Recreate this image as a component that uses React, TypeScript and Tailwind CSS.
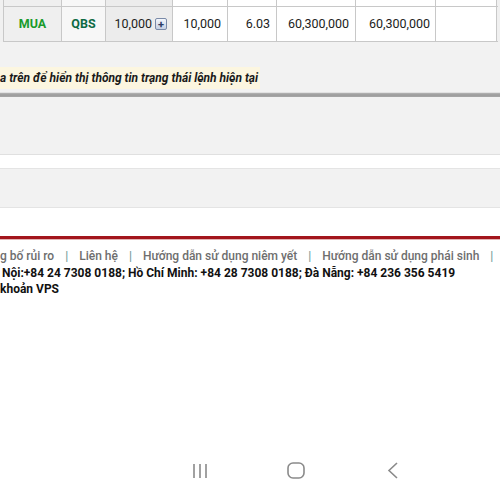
import React from "react";

const cols = [
  { w: "w-[59px]", bg: "bg-[#efefef]" },
  { w: "w-[44px]", bg: "bg-[#f7f7f7]" },
  { w: "w-[67px]", bg: "bg-[#ececec]" },
  { w: "w-[55px]", bg: "bg-white" },
  { w: "w-[49px]", bg: "bg-white" },
  { w: "w-[79px]", bg: "bg-white" },
  { w: "w-[80px]", bg: "bg-white" },
  { w: "w-[61px]", bg: "bg-white" },
];

const App = () => {
  return (
    <div className="w-[500px] h-[500px] overflow-hidden bg-white flex flex-col font-['Roboto',sans-serif] text-[12px]">
      {/* order table */}
      <div className="bg-[#f0f0f0] pl-[3px] flex flex-col">
        <div className="flex h-[6px]">
          {cols.map((c, i) => (
            <div key={i} className={`${c.w} ${c.bg} border-r border-[#c8c8c8] ${i === 0 ? "border-l" : ""}`}></div>
          ))}
        </div>
        <div className="flex h-[36px] border-t border-b border-[#c8c8c8] w-[495px] text-[12.5px]">
          <div className="w-[59px] bg-[#efefef] border-l border-r border-[#c8c8c8] flex items-center justify-center font-bold text-[#1a9b2c]">
            MUA
          </div>
          <div className="w-[44px] bg-[#f7f7f7] border-r border-[#c8c8c8] flex items-center justify-center font-bold text-[#0e6b44]">
            QBS
          </div>
          <div className="w-[67px] bg-[#ececec] border-r border-[#c8c8c8] flex items-center justify-end pr-[5px] gap-[3px] text-[#222]">
            <span>10,000</span>
            <span className="w-[12px] h-[12px] rounded-[2px] border border-[#7a8aa8] bg-gradient-to-b from-[#f4f7fc] to-[#c5d0e4] flex items-center justify-center text-[11px] leading-none font-bold text-[#2c3c66]">
              +
            </span>
          </div>
          <div className="w-[55px] bg-white border-r border-[#c8c8c8] flex items-center justify-end pr-[6px] text-[#222]">
            10,000
          </div>
          <div className="w-[49px] bg-white border-r border-[#c8c8c8] flex items-center justify-end pr-[6px] text-[#222]">
            6.03
          </div>
          <div className="w-[79px] bg-white border-r border-[#c8c8c8] flex items-center justify-end pr-[6px] text-[#222]">
            60,300,000
          </div>
          <div className="w-[80px] bg-white border-r border-[#c8c8c8] flex items-center justify-end pr-[5px] text-[#222]">
            60,300,000
          </div>
          <div className="w-[61px] bg-white border-r border-[#c8c8c8]"></div>
        </div>
      </div>

      {/* hint */}
      <div className="bg-[#f2f2f2] h-[50px] flex items-center pt-[21px]">
        <span className="bg-[#fcf6e0] pr-[2px] py-[2px] italic font-bold text-[12px] text-[#1a1a1a]">
          a trên để hiển thị thông tin trạng thái lệnh hiện tại
        </span>
      </div>

      {/* thick separator */}
      <div className="h-[1px] bg-[#e2e2e2]"></div>
      <div className="h-[4px] bg-gradient-to-b from-[#b4b4b4] via-[#9c9c9c] to-[#a8a8a8]"></div>

      {/* panels */}
      <div className="h-[58px] bg-[#f2f2f2] border-b border-[#e0e0e0]"></div>
      <div className="h-[13px] bg-white"></div>
      <div className="h-[40px] bg-[#f2f2f2] border-t border-b border-[#e4e4e4]"></div>

      {/* footer */}
      <div className="h-[28px] bg-white"></div>
      <div className="h-[3px] bg-[#a3161c]"></div>
      <div className="h-[1px] bg-[#e3b4b4]"></div>
      <div className="flex flex-col pt-[8px] leading-[16.5px] whitespace-nowrap">
        <div className="flex items-center text-[#6e6e6e] font-medium gap-[11px]">
          <span>g bố rủi ro</span>
          <span className="text-[#6f9c9a]">|</span>
          <span>Liên hệ</span>
          <span className="text-[#6f9c9a]">|</span>
          <span>Hướng dẫn sử dụng niêm yết</span>
          <span className="text-[#6f9c9a]">|</span>
          <span>Hướng dẫn sử dụng phái sinh</span>
          <span className="text-[#6f9c9a]">|</span>
        </div>
        <div className="pl-[2px] font-bold text-[#111]">
          Nội:+84 24 7308 0188; Hồ Chí Minh: +84 28 7308 0188; Đà Nẵng: +84 236 356 5419
        </div>
        <div className="font-bold text-[#111]">khoản VPS</div>
      </div>

      <div className="flex-1"></div>

      {/* android nav bar */}
      <div className="h-[52px] flex items-start pt-[14px]">
        <div className="w-[500px] flex items-center">
          <div className="w-[191px]"></div>
          <svg width="18" height="16" viewBox="0 0 18 16" fill="none" stroke="#8a8a8a" strokeWidth="1.6">
            <line x1="3" y1="1" x2="3" y2="15" />
            <line x1="9" y1="1" x2="9" y2="15" />
            <line x1="15" y1="1" x2="15" y2="15" />
          </svg>
          <div className="w-[78px]"></div>
          <svg width="18" height="17" viewBox="0 0 18 17" fill="none" stroke="#8a8a8a" strokeWidth="1.6">
            <rect x="1" y="1" width="16" height="15" rx="5" />
          </svg>
          <div className="w-[82px]"></div>
          <svg width="12" height="17" viewBox="0 0 12 17" fill="none" stroke="#8a8a8a" strokeWidth="1.6">
            <polyline points="10,1 2,8.5 10,16" />
          </svg>
        </div>
      </div>
    </div>
  );
};

export default App;
